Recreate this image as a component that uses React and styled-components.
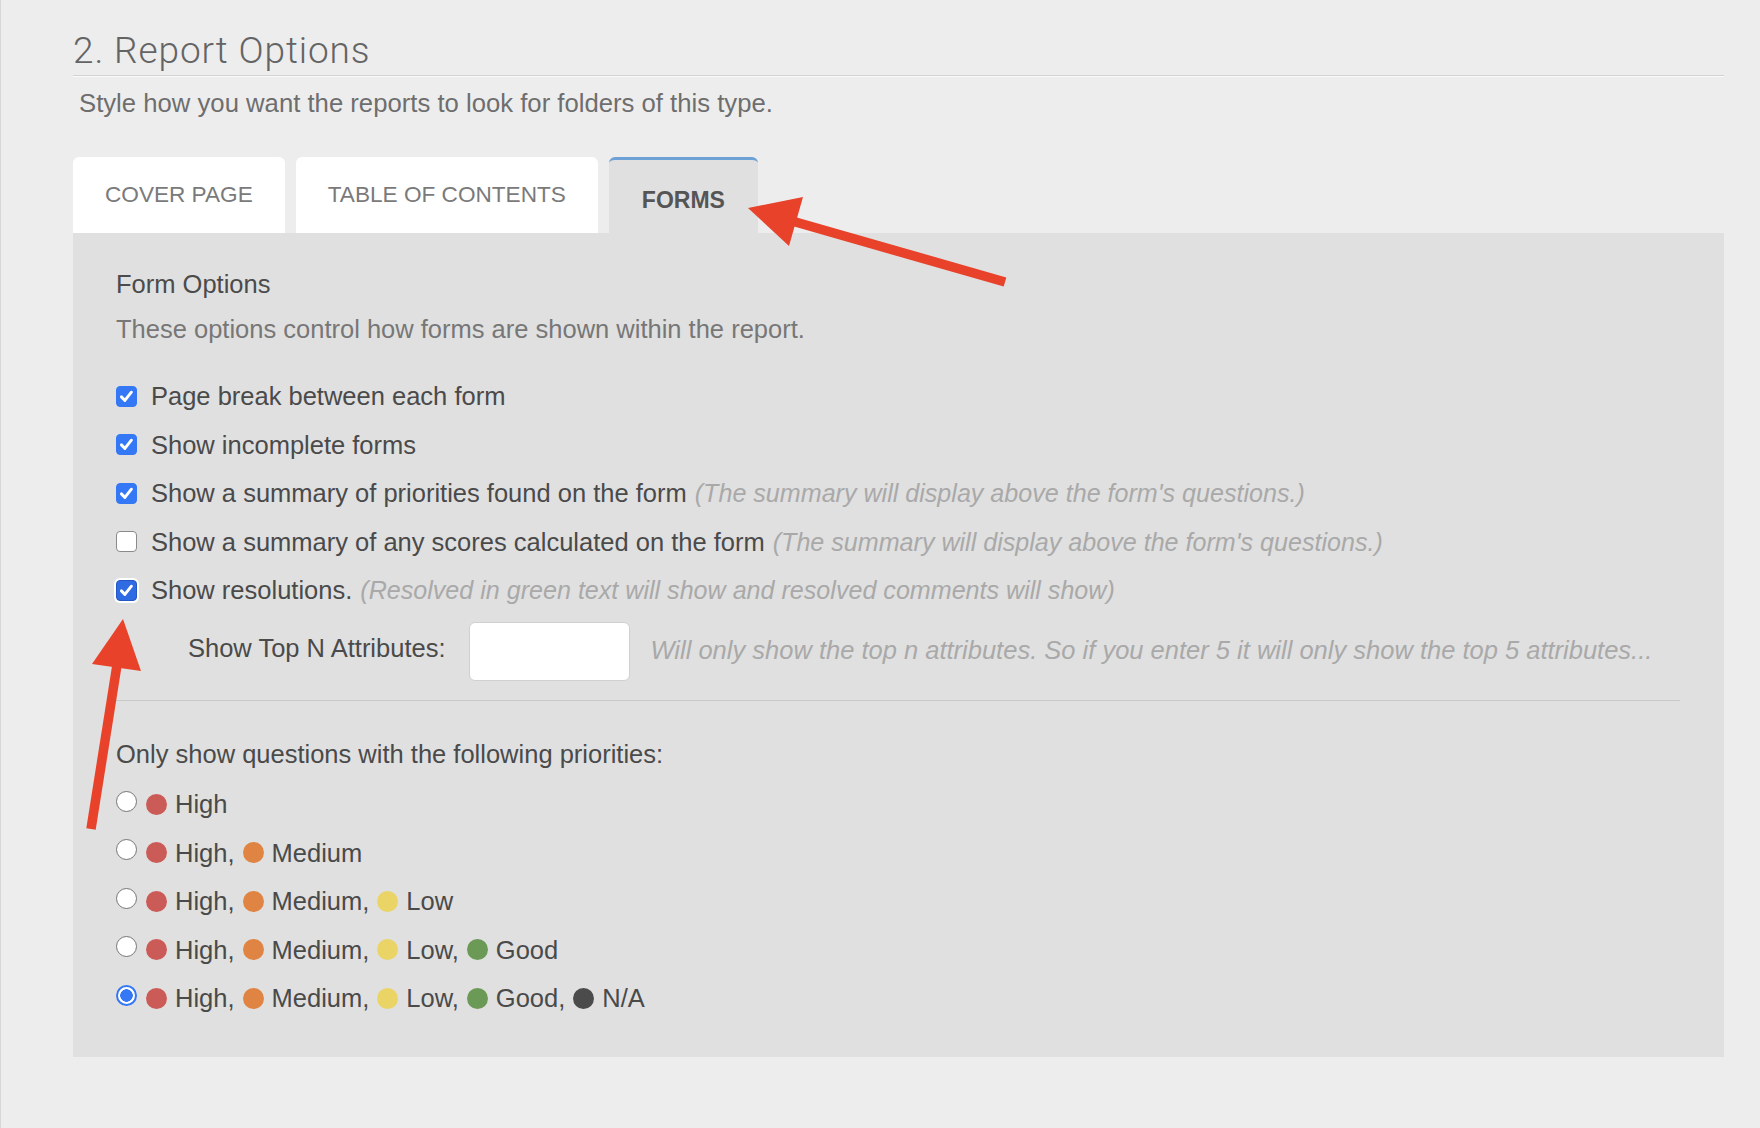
import React from "react";
import styled, { createGlobalStyle } from "styled-components";

const GlobalStyle = createGlobalStyle`
  html, body {
    margin: 0;
    padding: 0;
    background: #ededed;
  }
  body {
    font-family: "Liberation Sans", Arial, sans-serif;
  }
  * {
    box-sizing: border-box;
  }
`;

const Page = styled.div`
  position: relative;
  min-height: 100vh;
  padding: 0 36px 0 73px;
  box-shadow: inset 1px 0 0 #d8d8d8;
`;

const Title = styled.h1`
  margin: 0;
  padding: 29px 0 2px;
  font-family: "Roboto", "Liberation Sans", sans-serif;
  font-weight: 300;
  font-size: 37px;
  letter-spacing: 0.9px;
  line-height: 44px;
  color: #646464;
  border-bottom: 1px solid #d2d2d2;
  box-shadow: 0 1px 0 #fafafa;
`;

const Lead = styled.p`
  margin: 12px 0 0 6px;
  font-size: 25.7px;
  line-height: 30px;
  color: #6e6e6e;
`;

const Tabs = styled.div`
  display: flex;
  gap: 11px;
  margin-top: 39px;
`;

const Tab = styled.div`
  display: flex;
  align-items: center;
  height: 76px;
  padding: ${(p) => (p.$active ? "7px 33px 0" : "0 32px")};
  border-radius: 6px 6px 0 0;
  border-top: ${(p) => (p.$active ? "3px solid #6ea2d6" : "none")};
  background: ${(p) => (p.$active ? "#e0e0e0" : "#ffffff")};
  color: ${(p) => (p.$active ? "#555555" : "#7a7a7a")};
  font-weight: ${(p) => (p.$active ? 700 : 400)};
  font-size: ${(p) => (p.$active ? "23px" : "22.6px")};
  white-space: nowrap;
  cursor: pointer;
`;

const Panel = styled.section`
  background: #e0e0e0;
  padding: 36px 44px 44px 43px;
`;

const Heading = styled.div`
  font-size: 25.5px;
  line-height: 30px;
  color: #4b4b4b;
`;

const Note = styled.div`
  margin-top: 15px;
  font-size: 25.5px;
  line-height: 30px;
  color: #777777;
`;

const List = styled.div`
  display: flex;
  flex-direction: column;
  gap: 18.5px;
  margin-top: ${(p) => p.$top}px;
`;

const Row = styled.label`
  display: flex;
  align-items: center;
  font-size: 25.5px;
  line-height: 30px;
  color: #4a4a4a;
  white-space: nowrap;
`;

const Hint = styled.span`
  margin-left: 8px;
  font-size: 25.1px;
  font-style: italic;
  color: #a9a9a9;
`;

const Box = styled.span`
  flex: none;
  display: flex;
  align-items: center;
  justify-content: center;
  width: 21px;
  height: 21px;
  margin-right: 14px;
  border-radius: 4px;
  background: ${(p) => (p.$checked ? (p.$focus ? "#2f6be3" : "#3478f6") : "#ffffff")};
  border: 1px solid
    ${(p) => (p.$checked ? (p.$focus ? "#2457c2" : "#3478f6") : "#8a8a8a")};
  box-shadow: ${(p) => (p.$focus ? "0 0 0 2px #ffffff" : "none")};
`;

const TopN = styled.div`
  display: flex;
  align-items: center;
  margin: 17px 0 0 72px;
  font-size: 25.5px;
  color: #4a4a4a;
  white-space: nowrap;
`;

const TopLabel = styled.span`
  padding-bottom: 7px;
`;

const NumberInput = styled.input`
  width: 161px;
  height: 59px;
  margin: 0 21px 0 23px;
  border: 1px solid #d0d0d0;
  border-radius: 6px;
  background: #ffffff;
  font: inherit;
  outline: none;
`;

const TopHint = styled.span`
  padding-bottom: 3px;
  font-style: italic;
  color: #a9a9a9;
`;

const Divider = styled.hr`
  margin: 19px 0 0;
  border: 0;
  border-top: 1px solid #c9c9c9;
`;

const Question = styled.div`
  margin-top: 38px;
  font-size: 25.5px;
  line-height: 30px;
  color: #4a4a4a;
`;

const Radio = styled.span`
  flex: none;
  width: 21px;
  height: 21px;
  margin: 0 9px 6px 0;
  border-radius: 50%;
  border: ${(p) => (p.$checked ? "2px solid #3478f6" : "1.5px solid #767676")};
  background: ${(p) =>
    p.$checked
      ? "radial-gradient(circle, #3478f6 0 6px, #ffffff 6.5px)"
      : "#ffffff"};
`;

const Level = styled.span`
  display: inline-flex;
  align-items: center;
  gap: 8px;
  margin-right: 8px;
`;

const Dot = styled.span`
  width: 21px;
  height: 21px;
  border-radius: 50%;
  background: ${(p) => p.$color};
`;

const Arrows = styled.svg`
  position: absolute;
  top: 0;
  left: 0;
  pointer-events: none;
`;

const levels = [
  { name: "High", color: "#cb5b57" },
  { name: "Medium", color: "#df8443" },
  { name: "Low", color: "#ead466" },
  { name: "Good", color: "#6b9a56" },
  { name: "N/A", color: "#4b4b4b" },
];

const options = [
  { label: "Page break between each form", checked: true },
  { label: "Show incomplete forms", checked: true },
  {
    label: "Show a summary of priorities found on the form",
    hint: "(The summary will display above the form's questions.)",
    checked: true,
  },
  {
    label: "Show a summary of any scores calculated on the form",
    hint: "(The summary will display above the form's questions.)",
    checked: false,
  },
  {
    label: "Show resolutions.",
    hint: "(Resolved in green text will show and resolved comments will show)",
    checked: true,
    focus: true,
  },
];

function Check() {
  return (
    <svg width="15" height="15" viewBox="0 0 15 15">
      <path
        d="M2.4 7.9 L5.9 11.4 L12.4 3.2"
        fill="none"
        stroke="#fff"
        strokeWidth="2.9"
        strokeLinecap="round"
        strokeLinejoin="round"
      />
    </svg>
  );
}

function Option({ label, hint, checked, focus }) {
  return (
    <Row>
      <Box $checked={checked} $focus={focus}>
        {checked && <Check />}
      </Box>
      {label}
      {hint && <Hint>{hint}</Hint>}
    </Row>
  );
}

function PriorityChoice({ count, selected }) {
  const shown = levels.slice(0, count);
  return (
    <Row>
      <Radio $checked={selected} />
      {shown.map((lvl, i) => (
        <Level key={lvl.name}>
          <Dot $color={lvl.color} />
          {lvl.name}
          {i < shown.length - 1 ? "," : ""}
        </Level>
      ))}
    </Row>
  );
}

export default function App() {
  return (
    <>
      <GlobalStyle />
      <Page>
        <Title>2. Report Options</Title>
        <Lead>Style how you want the reports to look for folders of this type.</Lead>

        <Tabs>
          <Tab>COVER PAGE</Tab>
          <Tab>TABLE OF CONTENTS</Tab>
          <Tab $active>FORMS</Tab>
        </Tabs>

        <Panel>
          <Heading>Form Options</Heading>
          <Note>These options control how forms are shown within the report.</Note>

          <List $top={37}>
            {options.map((o) => (
              <Option key={o.label} {...o} />
            ))}
          </List>

          <TopN>
            <TopLabel>Show Top N Attributes:</TopLabel>
            <NumberInput type="text" />
            <TopHint>
              Will only show the top n attributes. So if you enter 5 it will only show the top 5
              attributes...
            </TopHint>
          </TopN>

          <Divider />

          <Question>Only show questions with the following priorities:</Question>
          <List $top={20}>
            {[1, 2, 3, 4, 5].map((n) => (
              <PriorityChoice key={n} count={n} selected={n === 5} />
            ))}
          </List>
        </Panel>

        <Arrows width="1760" height="1128" viewBox="0 0 1760 1128">
          <g fill="#e8422a" stroke="#e8422a">
            <line x1="792" y1="221" x2="1005" y2="282" strokeWidth="9.5" />
            <polygon points="748,208 803,197 789,246" stroke="none" />
            <line x1="117" y1="665" x2="91" y2="829" strokeWidth="9.5" />
            <polygon points="123,619 92,664 141,671" stroke="none" />
          </g>
        </Arrows>
      </Page>
    </>
  );
}
